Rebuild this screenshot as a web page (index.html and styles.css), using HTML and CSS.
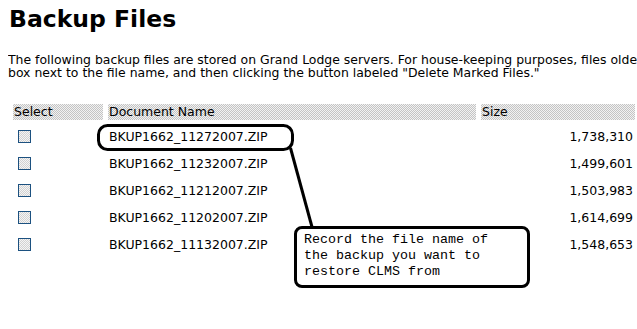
FILE: index.html
```html
<!DOCTYPE html>
<html>
<head>
<meta charset="utf-8">
<title>Backup Files</title>
<link rel="stylesheet" href="styles.css">
</head>
<body>
<h1 class="title">Backup Files</h1>
<p class="intro">The following backup files are stored on Grand Lodge servers. For house-keeping purposes, files older<br>box next to the file name, and then clicking the button labeled "Delete Marked Files."</p>
<table class="files">
  <thead>
    <tr>
      <th class="col-select">Select</th>
      <th class="col-name">Document Name</th>
      <th class="col-size">Size</th>
    </tr>
  </thead>
  <tbody>
    <tr><td class="cell-select"><input type="checkbox" class="mark"></td><td class="cell-name">BKUP1662_11272007.ZIP</td><td class="cell-size">1,738,310</td></tr>
    <tr><td class="cell-select"><input type="checkbox" class="mark"></td><td class="cell-name">BKUP1662_11232007.ZIP</td><td class="cell-size">1,499,601</td></tr>
    <tr><td class="cell-select"><input type="checkbox" class="mark"></td><td class="cell-name">BKUP1662_11212007.ZIP</td><td class="cell-size">1,503,983</td></tr>
    <tr><td class="cell-select"><input type="checkbox" class="mark"></td><td class="cell-name">BKUP1662_11202007.ZIP</td><td class="cell-size">1,614,699</td></tr>
    <tr><td class="cell-select"><input type="checkbox" class="mark"></td><td class="cell-name">BKUP1662_11132007.ZIP</td><td class="cell-size">1,548,653</td></tr>
  </tbody>
</table>

<svg class="annotation" width="637" height="329" viewBox="0 0 637 329" aria-hidden="true">
  <rect x="98.5" y="125.5" width="194" height="24" rx="9" ry="9" fill="none" stroke="#000" stroke-width="3"/>
  <line x1="290.5" y1="148" x2="312" y2="227" stroke="#000" stroke-width="3"/>
</svg>
<div class="callout">Record the file name of<br>the backup you want to<br>restore CLMS from</div>
</body>
</html>
```

FILE: styles.css
```css
html, body {
  overflow: hidden;
}
body {
  margin: 5px 8px 0 8px;
  font-family: "DejaVu Sans", Verdana, sans-serif;
  color: #000;
  background: #fff;
  width: 700px;
}
.title {
  margin: 0 0 0 1px;
  font-size: 23.5px;
  line-height: 28px;
  font-weight: bold;
}
.intro {
  margin: 20px 0 0 0;
  font-size: 12.45px;
  line-height: 13px;
  white-space: nowrap;
}
.files {
  margin-top: 20px;
  border-collapse: separate;
  border-spacing: 5px;
  margin-left: 0;
  font-size: 12.5px;
}
.files th {
  font-weight: normal;
  text-align: left;
  height: 16px;
  line-height: 16px;
  padding: 0 0 0 1px;
  background-color: #dcdcdc;
  background-image: repeating-conic-gradient(#c4c4c4 0 25%, #f2f2f2 0 50%);
  background-size: 2px 2px;
}
.col-select { width: 89px; }
.col-name { width: 367px; }
.col-size { width: 153px; padding-left: 2px; }
.files td {
  height: 22px;
  padding: 0 1px;
  vertical-align: middle;
}
.cell-name {
  padding-left: 1px;
}
.cell-size {
  text-align: right;
}
.files td.cell-size {
  padding-right: 2px;
}
.mark {
  appearance: none;
  -webkit-appearance: none;
  display: block;
  width: 13px;
  height: 13px;
  margin: 0 0 0 4px;
  box-sizing: border-box;
  border: 1px solid #1c5180;
  background-color: #e4e4e4;
  background-image: repeating-conic-gradient(#d2d2d2 0 25%, #f4f4f4 0 50%);
  background-size: 2px 2px;
}
.annotation {
  position: absolute;
  left: 0;
  top: 0;
  pointer-events: none;
}
.callout {
  position: absolute;
  left: 294px;
  top: 226px;
  width: 223px;
  height: 53px;
  padding: 3px 0 0 7px;
  border: 3px solid #000;
  border-radius: 8px;
  background: #fff;
  font-family: "Liberation Mono", "Courier New", monospace;
  font-size: 13.33px;
  line-height: 16px;
  white-space: nowrap;
}
```
